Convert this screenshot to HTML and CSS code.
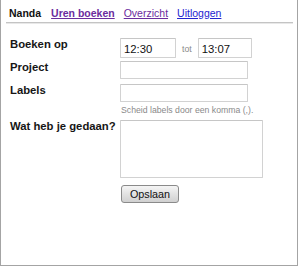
FILE: index.html
```html
<!DOCTYPE html>
<html lang="nl">
<head>
    <meta charset="UTF-8">
    <meta name="viewport" content="width=device-width, initial-scale=1.0">
    <title>Uren boeken</title>
    <link rel="stylesheet" href="styles.css">
</head>
<body>
    <div id="frame">
        <div id="menu">
            <span class="user">Nanda</span>
            <a href="#" class="current visited">Uren boeken</a>
            <a href="#" class="visited">Overzicht</a>
            <a href="#">Uitloggen</a>
        </div>

        <form id="booking-form">
            <div class="row row-time">
                <label for="start">Boeken op</label>
                <div class="field">
                    <input type="text" id="start" class="time" value="12:30">
                    <span class="tot">tot</span>
                    <input type="text" id="end" class="time time-end" value="13:07">
                </div>
            </div>

            <div class="row row-project">
                <label for="project">Project</label>
                <div class="field">
                    <input type="text" id="project" class="text">
                </div>
            </div>

            <div class="row row-labels">
                <label for="labels">Labels</label>
                <div class="field">
                    <input type="text" id="labels" class="text">
                    <p class="hint">Scheid labels door een komma (,).</p>
                </div>
            </div>

            <div class="row row-notes">
                <label for="notes">Wat heb je gedaan?</label>
                <div class="field">
                    <textarea id="notes"></textarea>
                </div>
            </div>

            <div class="row row-submit">
                <span></span>
                <div class="field">
                    <button type="button">Opslaan</button>
                </div>
            </div>
        </form>
    </div>
</body>
</html>
```

FILE: styles.css
```css
body {
    margin: 0;
    padding: 0;
    background-color: #fff;
    font-family: 'Liberation Sans', Arial, sans-serif;
    color: #1c1c1c;
}

#frame {
    width: 298px;
    height: 266px;
    box-sizing: border-box;
    border: 1px solid #a4a4a4;
    border-top: none;
}

#menu {
    margin: 0 4px 0 5px;
    padding: 7px 3px 2px 3px;
    font-size: 10.5px;
    line-height: 13px;
    border-bottom: 1px solid #c4c4c4;
    box-shadow: 0 1px 0 #e8e8e8;
    display: flex;
    gap: 9px;
}

#menu .user {
    font-weight: bold;
    color: #111;
    margin-right: 1px;
}

#menu a {
    color: #2323d0;
    text-decoration: underline;
}

#menu a.visited {
    color: #6b2c9e;
}

#menu a.current {
    font-weight: bold;
}

#booking-form {
    padding: 15px 0 0 9px;
}

.row {
    display: flex;
    align-items: flex-start;
}

.row label,
.row > span {
    width: 110px;
    flex: none;
    font-size: 11.3px;
    line-height: 13px;
    font-weight: bold;
    color: #161616;
}

.row-time {
    margin-bottom: 3px;
}

.row-project {
    margin-bottom: 5px;
}

.row-labels {
    margin-bottom: 4px;
}

.row-notes {
    margin-bottom: 7px;
}

.field {
    display: flex;
    flex-direction: column;
    align-items: flex-start;
}

.row-time .field {
    flex-direction: row;
    align-items: center;
}

input, textarea {
    box-sizing: border-box;
    margin: 0;
    border: 1px solid #d2d2d2;
    border-top-color: #c6c6c6;
    border-radius: 1px;
    font-family: 'Liberation Sans', Arial, sans-serif;
    font-size: 11.3px;
    color: #111;
    background: #fff;
    outline: none;
}

input.time {
    width: 56px;
    height: 20px;
    padding: 1px 3px 0 3px;
}

input.time-end {
    width: 54px;
}

.tot {
    font-size: 8.7px;
    color: #8a8a8a;
    margin: 1px 6px 0 6px;
}

input.text {
    width: 128px;
    height: 18px;
    padding: 0 3px;
}

.hint {
    margin: 2px 0 0 1px;
    font-size: 8.7px;
    line-height: 12px;
    color: #8a8a8a;
}

textarea {
    width: 143px;
    height: 58px;
    padding: 2px 3px;
    resize: none;
}

button {
    width: 58px;
    height: 18px;
    padding: 0;
    margin-left: 1px;
    font-family: 'Liberation Sans', Arial, sans-serif;
    font-size: 10.8px;
    color: #111;
    border: 1px solid #8a8a8a;
    border-radius: 3px;
    background: linear-gradient(#f5f5f5, #e2e2e2 50%, #d0d0d0);
    cursor: pointer;
}
```
